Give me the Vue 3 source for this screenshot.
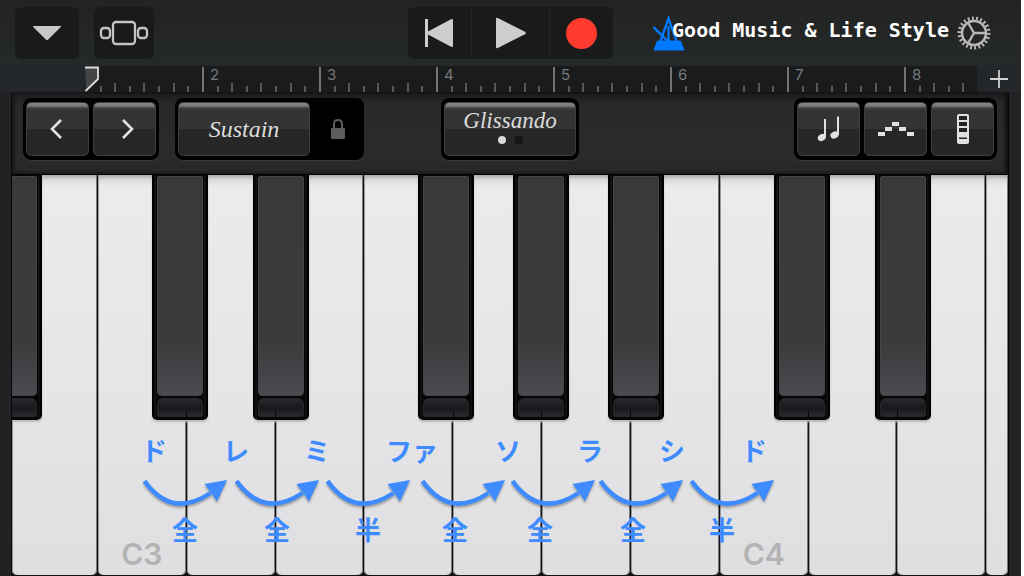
<script setup>
const KEYBOARD_UNITS = 996
const pct = (x) => `${(x / KEYBOARD_UNITS) * 100}%`

const ticks = Array.from({ length: 61 }, (_, i) => {
  const major = i > 0 && i % 8 === 0
  return { id: i, major, half: i % 2 === 0, label: major ? i / 8 + 1 : '' }
})

const whiteKeys = ['', 'C3', '', '', '', '', '', '', 'C4', '', '', '']
const blackKeys = [
  { x: -26, split: false },
  { x: 140, split: true },
  { x: 241, split: true },
  { x: 406, split: true },
  { x: 501, split: true },
  { x: 596, split: true },
  { x: 762, split: true },
  { x: 863, split: true },
].map((k, i) => {
  const joints = [0, 174, 263, 441, 529, 618, 796, 885]
  return { ...k, joint: `${((joints[i] - k.x) / 56) * 100}%` }
})

const notes = [
  { text: 'ド', x: 142 },
  { text: 'レ', x: 224 },
  { text: 'ミ', x: 305 },
  { text: 'ファ', x: 400 },
  { text: 'ソ', x: 496 },
  { text: 'ラ', x: 578 },
  { text: 'シ', x: 660 },
  { text: 'ド', x: 742 },
]
const steps = [
  { text: '全', x: 173 },
  { text: '全', x: 265 },
  { text: '半', x: 356 },
  { text: '全', x: 443 },
  { text: '全', x: 528 },
  { text: '全', x: 621 },
  { text: '半', x: 710 },
]
const arrows = [174, 266, 357, 452, 542, 630, 721]

const intervals = [[1, 21], [8, 16], [15, 11], [22, 16], [30, 21]]
</script>

<template>
  <main class="app">
    <header class="topbar">
      <div class="side">
        <button class="tool menu" aria-label="Menu">
          <svg width="30" height="18" viewBox="0 0 30 18"><path d="M1.500 2h27q1 0 .3 1L16.200 15.500q-1.200 1.200-2.400 0L1.200 3q-.7-1 .3-1z" fill="#c8c8c8" /></svg>
        </button>
        <button class="tool browser" aria-label="Browser">
          <svg width="50" height="26" viewBox="0 0 50 26" fill="none" stroke="#c3c3c3" stroke-width="2.300">
            <rect x="14" y="2" width="22" height="22" rx="3" />
            <rect x="2" y="8" width="9" height="10" rx="3" />
            <rect x="39" y="8" width="9" height="10" rx="3" />
          </svg>
        </button>
      </div>
      <div class="transport">
        <button aria-label="Rewind">
          <svg width="30" height="30" viewBox="0 0 30 30"><path d="M1 1h3v12.500L27 1.200q2-.8 2 1v25.600q0 1.800-2 1L4 16.500V29H1z" fill="#cdcdcd" /></svg>
        </button>
        <button class="play" aria-label="Play">
          <svg width="32" height="32" viewBox="0 0 32 32"><path d="M1 2q0-1.800 1.800-1L30 14.700q1.800 1.300 0 2.600L2.800 31Q1 31.800 1 30z" fill="#cdcdcd" /></svg>
        </button>
        <button aria-label="Record"><span class="record"></span></button>
      </div>
      <div class="side end">
        <svg class="metronome" width="32" height="36" viewBox="0 0 32 36">
          <path d="M1 35 4.500 26h23L31 35z" fill="#007aff" stroke="#007aff" stroke-linejoin="round" />
          <path d="M7.500 26 15.500 3.500 23.500 26M.5 12l14 14M15.500 11v15" fill="none" stroke="#007aff" stroke-width="2.300" />
        </svg>
        <h1>Good Music &amp; Life Style</h1>
        <button class="gear" aria-label="Settings">
          <svg width="34" height="34" viewBox="-17 -17 34 34" fill="none" stroke="#b9b9b9">
            <circle r="12" stroke-width="2.500" />
            <circle r="14.700" stroke-width="3.600" pathLength="110" stroke-dasharray="2.200 2.800" />
            <path d="M0 0h12M0 0-6-10.400M0 0-6 10.400" stroke-width="2.300" />
          </svg>
        </button>
      </div>
    </header>

    <div class="timeline">
      <div class="ruler">
        <span v-for="t in ticks" :key="t.id" class="tick" :class="{ major: t.major, half: t.half }">{{ t.label }}</span>
        <svg class="playhead" width="15" height="26" viewBox="0 0 15 26"><path d="M0 1h13v12L1 25z" fill="#444547" /><path d="M0 1.500h13V13L.5 25" fill="none" stroke="#dedede" stroke-width="1.800" /></svg>
      </div>
      <button class="add" aria-label="Add section">
        <svg width="18" height="18" viewBox="0 0 18 18"><path d="M9 0v18M0 9h18" stroke="#d2d2d2" stroke-width="1.800" /></svg>
      </button>
    </div>

    <section class="instrument">
      <div class="panel">
        <div class="controls">
          <div class="group">
            <button class="cap prev" aria-label="Previous octave"><svg width="14" height="22" viewBox="0 0 14 22"><path d="M12 2 3 11l9 9" fill="none" stroke="#e2e2e2" stroke-width="2.600" /></svg></button>
            <button class="cap next" aria-label="Next octave"><svg width="14" height="22" viewBox="0 0 14 22"><path d="m2 2 9 9-9 9" fill="none" stroke="#e2e2e2" stroke-width="2.600" /></svg></button>
          </div>
          <div class="group sustain">
            <button class="cap script">Sustain</button>
            <button class="lock" aria-label="Lock sustain">
              <svg width="16" height="22" viewBox="0 0 16 22"><rect x="1" y="10" width="14" height="11" rx="1" fill="#5c5c5c" /><path d="M4 11V6q0-4 4-4t4 4v5" fill="none" stroke="#5c5c5c" stroke-width="2" /></svg>
            </button>
          </div>
        </div>
        <div class="group">
          <button class="cap script glissando">
            <span>Glissando</span>
            <span class="dots"><i class="dot on"></i><i class="dot"></i></span>
          </button>
        </div>
        <div class="controls right">
          <div class="group">
            <button class="cap" aria-label="Chords">
              <svg width="24" height="28" viewBox="0 0 24 28" fill="#e0e0e0"><ellipse cx="4.800" cy="22.500" rx="4.200" ry="3.400" transform="rotate(-25 4.800 22.500)" /><path d="M7 4h2v18H7z" /><ellipse cx="17.500" cy="20" rx="4.200" ry="3.400" transform="rotate(-25 17.500 20)" /><path d="M20 1.500h2V20h-2z" /></svg>
            </button>
            <button class="cap" aria-label="Arpeggiator">
              <svg width="38" height="28" viewBox="0 0 38 28" fill="#e0e0e0"><rect v-for="[x, y] in intervals" :key="x" :x="x" :y="y - 4" width="7" height="4" /></svg>
            </button>
            <button class="cap" aria-label="Scale">
              <svg width="12" height="32" viewBox="0 0 12 32"><rect x="0" y="1" width="12" height="30" rx="2" fill="#e0e0e0" /><path d="M2 3h8v4H2zM2 9h8v4H2zM2 15h8v4H2zM2 24.500h8v1.500H2z" fill="#222" /></svg>
            </button>
          </div>
        </div>
      </div>

      <div class="keyboard">
        <div class="whites">
          <div v-for="(k, i) in whiteKeys" :key="i" class="white">{{ k }}</div>
        </div>
        <div v-for="k in blackKeys" :key="k.x" class="black" :style="{ left: pct(k.x), width: pct(56) }">
          <div class="face"></div>
          <div class="lip"></div>
          <span v-if="k.split" class="joint" :style="{ left: k.joint }"></span>
        </div>
        <span v-for="n in notes" :key="n.x" class="mark note" :style="{ left: pct(n.x) }">{{ n.text }}</span>
        <svg v-for="x in arrows" :key="x" class="mark arrow" :style="{ left: pct(x) }" width="86" height="34" viewBox="0 0 86 34">
          <path d="M1.500 4q27 38 66 12" fill="none" stroke="#3d8bff" stroke-width="4.500" />
          <path d="m84 3-10 21.500-4-6-8.500-11.500z" fill="#3d8bff" />
        </svg>
        <span v-for="s in steps" :key="s.x" class="mark step" :style="{ left: pct(s.x) }">{{ s.text }}</span>
      </div>
    </section>
  </main>
</template>

<style>
body {
  margin: 0;
  background: #fff;
}
</style>

<style scoped>
.app {
  box-sizing: border-box;
  min-height: 100vh;
  margin-right: 3px;
  display: flex;
  flex-direction: column;
  background: #222225;
  font-family: Inter, "Liberation Sans", sans-serif;
}
button {
  margin: 0;
  padding: 0;
  border: 0;
  background: none;
  display: flex;
  align-items: center;
  justify-content: center;
}
svg {
  display: block;
  flex: none;
}
.topbar {
  height: 66px;
  box-sizing: border-box;
  padding: 0 30px 0 15px;
  display: grid;
  grid-template-columns: minmax(0, 1fr) auto minmax(0, 1fr);
  align-items: center;
  background: linear-gradient(#232323, #252929);
}
.side {
  display: flex;
  align-items: center;
  gap: 15px;
}
.side.end {
  justify-content: flex-end;
  gap: 0;
}
.tool {
  height: 52px;
  border-radius: 6px;
  background: #191a1a;
}
.menu {
  width: 64px;
}
.browser {
  width: 60px;
}
.transport {
  display: flex;
  gap: 1px;
  height: 52px;
  margin-left: 14px;
  border-radius: 6px;
  overflow: hidden;
  background: #242626;
}
.transport button {
  width: 63px;
  background: #191a1a;
}
.transport .play {
  width: 77px;
  padding-left: 2px;
}
.record {
  width: 31px;
  height: 31px;
  border-radius: 50%;
  background: #ff3b30;
}
.metronome {
  margin-right: -13px;
}
h1 {
  position: relative;
  margin: 0 8px 6px 0;
  color: #fff;
  font: bold 20px/24px "DejaVu Sans Mono", monospace;
  white-space: nowrap;
}
.timeline {
  height: 26px;
  padding-left: 85px;
  display: flex;
  background: #232729;
}
.ruler {
  position: relative;
  flex: 1;
  display: grid;
  grid-template-columns: repeat(61, minmax(0, 1fr));
  align-items: end;
  background: #1a1b1c;
}
.tick {
  height: 6px;
  border-left: 2px solid #57585a;
  color: #77787a;
  font-size: 15px;
  line-height: 16px;
  white-space: nowrap;
}
.tick.half {
  height: 9px;
}
.tick.major {
  height: 25px;
  padding-left: 6px;
  border-color: #737476;
}
.tick:first-child {
  visibility: hidden;
}
.playhead {
  position: absolute;
  left: 0;
  top: 0;
}
.add {
  width: 44px;
}
.instrument {
  flex: 1;
  display: flex;
  flex-direction: column;
  margin-right: 12px;
  margin-left: 11px;
  border: solid #08080a;
  border-width: 0 1px;
}
.panel {
  height: 83px;
  box-sizing: border-box;
  padding: 6px 11px 0;
  display: grid;
  grid-template-columns: 1fr auto 1fr;
  align-items: start;
  background: linear-gradient(#19191b, #29292b 12px, #2b2b2d 65px, #252527);
  border-bottom: 1px solid #000;
  box-shadow: inset 3px 0 3px #1b1b1d, inset -3px 0 3px #111;
}
.controls {
  display: flex;
  gap: 16px;
}
.right {
  justify-content: flex-end;
}
.group {
  height: 62px;
  box-sizing: border-box;
  padding: 4px 3px;
  display: flex;
  gap: 4px;
  border-radius: 8px;
  background: #000;
  box-shadow: 0 1px 1px #39393b;
}
.cap {
  width: 63px;
  box-sizing: border-box;
  border: 1px solid #3d3d3d;
  border-radius: 5px;
  background: linear-gradient(#888 0, #777 3px, #444 5px, #333 7px, #343434 50%, #262626 50%, #272727);
}
.prev {
  padding-right: 4px;
}
.next {
  padding-left: 6px;
}
.script {
  width: 132px;
  color: #dcdcdc;
  font: italic 24px/24px "Liberation Serif", serif;
}
.sustain {
  gap: 0;
}
.lock {
  width: 51px;
  padding-left: 4px;
}
.glissando {
  flex-direction: column;
  justify-content: flex-start;
  padding-top: 6px;
  font-size: 23px;
}
.dots {
  display: flex;
  gap: 9px;
}
.dot {
  width: 8px;
  height: 8px;
  margin-top: 3px;
  border-radius: 50%;
  background: #151515;
  box-shadow: 0 0 1px #000;
}
.dot.on {
  background: #dadada;
}
.keyboard {
  position: relative;
  flex: 1;
  display: flex;
  overflow: hidden;
  background: #111;
}
.whites {
  flex: 1;
  display: grid;
  grid-template-columns: 86fr repeat(10, 89fr) 22fr;
  gap: 1px;
  margin-bottom: 1px;
}
.white {
  display: flex;
  align-items: flex-end;
  justify-content: center;
  padding-bottom: 3px;
  border-radius: 0 0 5px 5px;
  background: linear-gradient(#a9a9ac, #dcdcde 5px, #ebebed 12px, #e7e7e9 40%, #dfdfe1);
  box-shadow: inset 1px 0 #98989b, inset -1px 0 #77777a;
  color: #b3b3b5;
  font-size: 30px;
  font-weight: 600;
  line-height: 36px;
}
.black {
  position: absolute;
  top: 0;
  height: 61%;
  box-sizing: border-box;
  padding: 1px 5px 3px;
  display: flex;
  flex-direction: column;
  gap: 2px;
  border-radius: 0 0 5px 5px;
  background: linear-gradient(90deg, #000 2px, #1c1c1d 3px, #060607 4px, #060607 calc(100% - 4px), #1c1c1d calc(100% - 3px), #000 calc(100% - 2px));
  box-shadow: 0 2px 2px #b9b9bc;
}
.face {
  flex: 1;
  border: 1px solid #454648;
  border-radius: 2px 2px 4px 4px;
  background: linear-gradient(#38393a, #3a3b3c 75%, #4a4a50);
}
.lip {
  height: 17px;
  border: 1px solid #252629;
  border-radius: 6px 6px 2px 2px;
  background: linear-gradient(#292a2e, #17181a 55%, #292a2d);
}
.joint {
  position: absolute;
  bottom: 0;
  width: 1px;
  height: 9px;
  background: #050505;
}
.mark {
  position: absolute;
  transform: translateX(-50%);
  color: #3d8bff;
  font-family: "Noto Sans CJK JP", sans-serif;
  font-size: 26px;
  font-weight: 700;
  line-height: 36px;
  white-space: nowrap;
}
.note {
  top: 257px;
}
.arrow {
  top: 302px;
  filter: drop-shadow(0 2px 1px rgba(0, 0, 0, 0.3));
}
.step {
  top: 336px;
}
</style>
